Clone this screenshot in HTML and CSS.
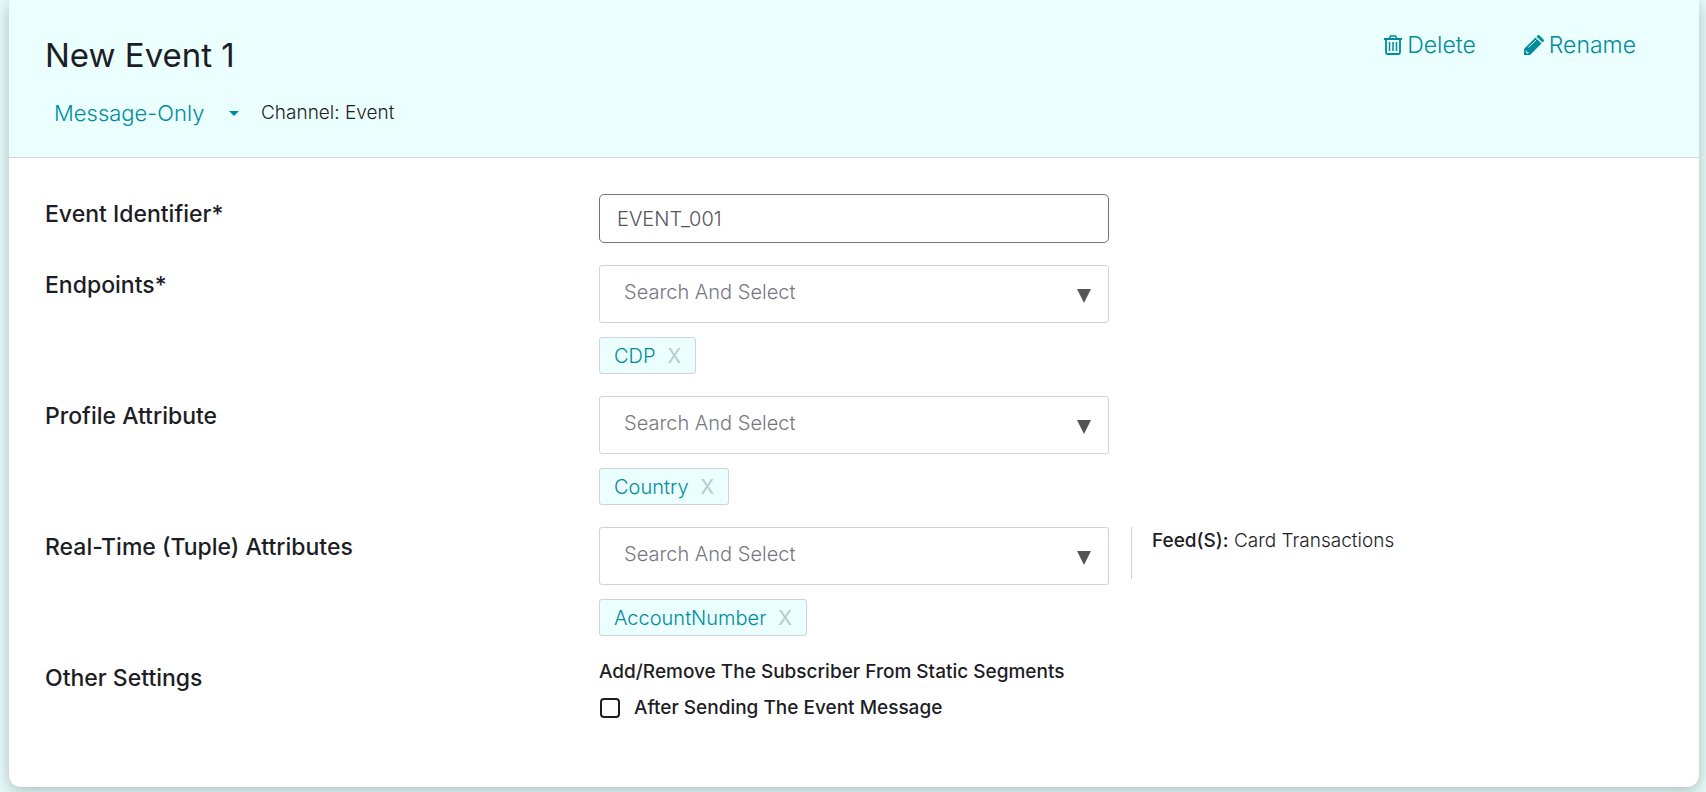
FILE: index.html
```
<!DOCTYPE html>
<html lang="en">
<head>
    <meta charset="UTF-8">
    <meta name="viewport" content="width=device-width, initial-scale=1.0">
    <title>New Event 1</title>
    <link rel="stylesheet" href="styles.css">
</head>
<body>
    <main class="card">
        <header class="card-header">
            <div class="heading">
                <h1>New Event 1</h1>
                <div class="sub-heading">
                    <div class="type-select">
                        <select aria-label="Event type">
                            <option>Message-Only</option>
                        </select>
                    </div>
                    <span class="channel">Channel: Event</span>
                </div>
            </div>
            <div class="actions">
                <button type="button" class="action">
                    <svg class="icon" viewBox="0 0 18 20" width="18" height="20" fill="none" stroke="currentColor" aria-hidden="true">
                        <path d="M0 4h18" stroke-width="2"/>
                        <path d="M5 4l1.500-3h5l1.500 3" stroke-width="1.600"/>
                        <path d="M2 4v13.500q0 1.500 1.500 1.500h11q1.500 0 1.500-1.500V4" stroke-width="1.800"/>
                        <path d="M5.500 7v9M9 7v9M12.500 7v9" stroke-width="1.500"/>
                    </svg>
                    Delete
                </button>
                <button type="button" class="action">
                    <svg class="icon" viewBox="0 0 20 20" width="20" height="20" aria-hidden="true">
                        <path fill="currentColor" d="M0 20v-6L11.500 2.500l6 6L6 20z"/>
                        <path fill="currentColor" d="M12.500 1.500L13.500.5q1-.9 2 0l4 4q.9 1 0 2l-1 1z"/>
                        <path fill="none" stroke="#ebffff" stroke-width="1" d="M4.500 12.500l8-8"/>
                        <path fill="#ebffff" d="M1.700 15.500l1 0v1.800h1.800v1l-1 .5-1.800-1.700z"/>
                    </svg>
                    Rename
                </button>
            </div>
        </header>

        <form class="settings">
            <div class="row">
                <label class="row-label" for="identifier">Event Identifier*</label>
                <input class="text-input" id="identifier" type="text" value="EVENT_001">
            </div>
            <div class="row">
                <label class="row-label" for="endpoints">Endpoints*</label>
                <div class="field">
                    <div class="search-select">
                        <select id="endpoints">
                            <option>Search And Select</option>
                        </select>
                    </div>
                    <span class="tag">CDP <button type="button" aria-label="Remove CDP">X</button></span>
                </div>
            </div>
            <div class="row">
                <label class="row-label" for="profile">Profile Attribute</label>
                <div class="field">
                    <div class="search-select">
                        <select id="profile">
                            <option>Search And Select</option>
                        </select>
                    </div>
                    <span class="tag">Country <button type="button" aria-label="Remove Country">X</button></span>
                </div>
            </div>
            <div class="row">
                <label class="row-label" for="tuple">Real-Time (Tuple) Attributes</label>
                <div class="field">
                    <div class="search-select">
                        <select id="tuple">
                            <option>Search And Select</option>
                        </select>
                    </div>
                    <span class="tag">AccountNumber <button type="button" aria-label="Remove AccountNumber">X</button></span>
                </div>
                <p class="feeds"><strong>Feed(S):</strong> Card Transactions</p>
            </div>
            <div class="row">
                <span class="row-label">Other Settings</span>
                <div class="segments">
                    <p>Add/Remove The Subscriber From Static Segments</p>
                    <label><input type="checkbox"> After Sending The Event Message</label>
                </div>
            </div>
        </form>
    </main>
</body>
</html>
```
FILE: styles.css
```
* {
    box-sizing: border-box;
}

body {
    margin: 0;
    padding: 0 7px 5px 9px;
    background-color: #e6fbfa;
    color: #1d1d25;
    font-family: Inter, "Liberation Sans", sans-serif;
    font-size: 20px;
    font-weight: 300;
    line-height: 28px;
}

h1,
p {
    margin: 0;
}

button,
input,
select {
    font: inherit;
    color: inherit;
}

.card {
    background-color: #ffffff;
    border-radius: 0 0 12px 12px;
    box-shadow: 0 4px 16px rgba(0, 0, 0, 0.25);
}

/* Header */
.card-header {
    display: flex;
    justify-content: space-between;
    align-items: flex-start;
    padding: 31px 63px 28px 36px;
    background-color: #ebffff;
    border-bottom: 1px solid #cfd2e3;
}

h1 {
    font-size: 33px;
    font-weight: 400;
    line-height: 48px;
}

.sub-heading {
    display: flex;
    align-items: center;
    gap: 22px;
    margin-top: 18px;
    padding-left: 9px;
}

.type-select {
    display: grid;
    align-items: center;
    color: #008c9a;
    font-size: 22px;
}

.type-select select {
    grid-area: 1 / 1;
    appearance: none;
    padding: 0 34px 0 0;
    border: none;
    background: none;
    line-height: 32px;
}

.type-select::after {
    content: "";
    grid-area: 1 / 1;
    justify-self: end;
    border: 5px solid transparent;
    border-top-color: currentColor;
    border-bottom: none;
    pointer-events: none;
}

.channel {
    font-size: 19px;
}

.actions {
    display: flex;
    gap: 48px;
}

.action {
    display: flex;
    align-items: center;
    gap: 5px;
    padding: 0;
    border: none;
    background: none;
    color: #008c9a;
    font-size: 23px;
    cursor: pointer;
}

/* Form rows */
.settings {
    display: flex;
    flex-direction: column;
    gap: 22px;
    padding: 36px 36px 65px;
}

.row {
    display: grid;
    grid-template-columns: 554fr 510fr 554fr;
    align-items: start;
}

.row-label {
    padding-top: 6px;
    font-size: 23px;
    font-weight: 500;
}

.text-input {
    width: 100%;
    height: 49px;
    padding: 0 17px;
    border: 1px solid #72708a;
    border-radius: 5px;
    color: #55555c;
}

.search-select {
    display: grid;
    align-items: center;
    margin-bottom: 14px;
}

.search-select select {
    grid-area: 1 / 1;
    appearance: none;
    width: 100%;
    height: 58px;
    padding: 0 48px 4px 24px;
    border: 1px solid #d2d0e6;
    border-radius: 3px;
    background-color: #ffffff;
    color: #777783;
}

.search-select::after {
    content: "";
    grid-area: 1 / 1;
    justify-self: end;
    margin-top: 4px;
    margin-right: 18px;
    border: 7px solid transparent;
    border-top: 14px solid #555555;
    border-bottom: none;
    pointer-events: none;
}

.tag {
    display: inline-flex;
    align-items: center;
    gap: 12px;
    height: 37px;
    padding: 0 14px;
    border: 1px solid #cfd2e3;
    border-radius: 3px;
    background-color: #ebffff;
    color: #008c9a;
    vertical-align: top;
}

.tag button {
    padding: 0;
    border: none;
    background: none;
    color: #b9c9c9;
    font-weight: 400;
    cursor: pointer;
}

.feeds {
    min-height: 52px;
    margin-left: 22px;
    padding-left: 20px;
    border-left: 1px solid #d2d0e6;
    font-size: 19px;
}

.feeds strong {
    font-weight: 500;
}

.segments {
    font-size: 19px;
    font-weight: 500;
}

.segments label {
    display: flex;
    align-items: center;
    gap: 14px;
    margin-top: 8px;
}

.segments input {
    appearance: none;
    width: 20px;
    height: 20px;
    margin: 0 0 0 1px;
    border: 2px solid #1d1d25;
    border-radius: 4px;
}
```
